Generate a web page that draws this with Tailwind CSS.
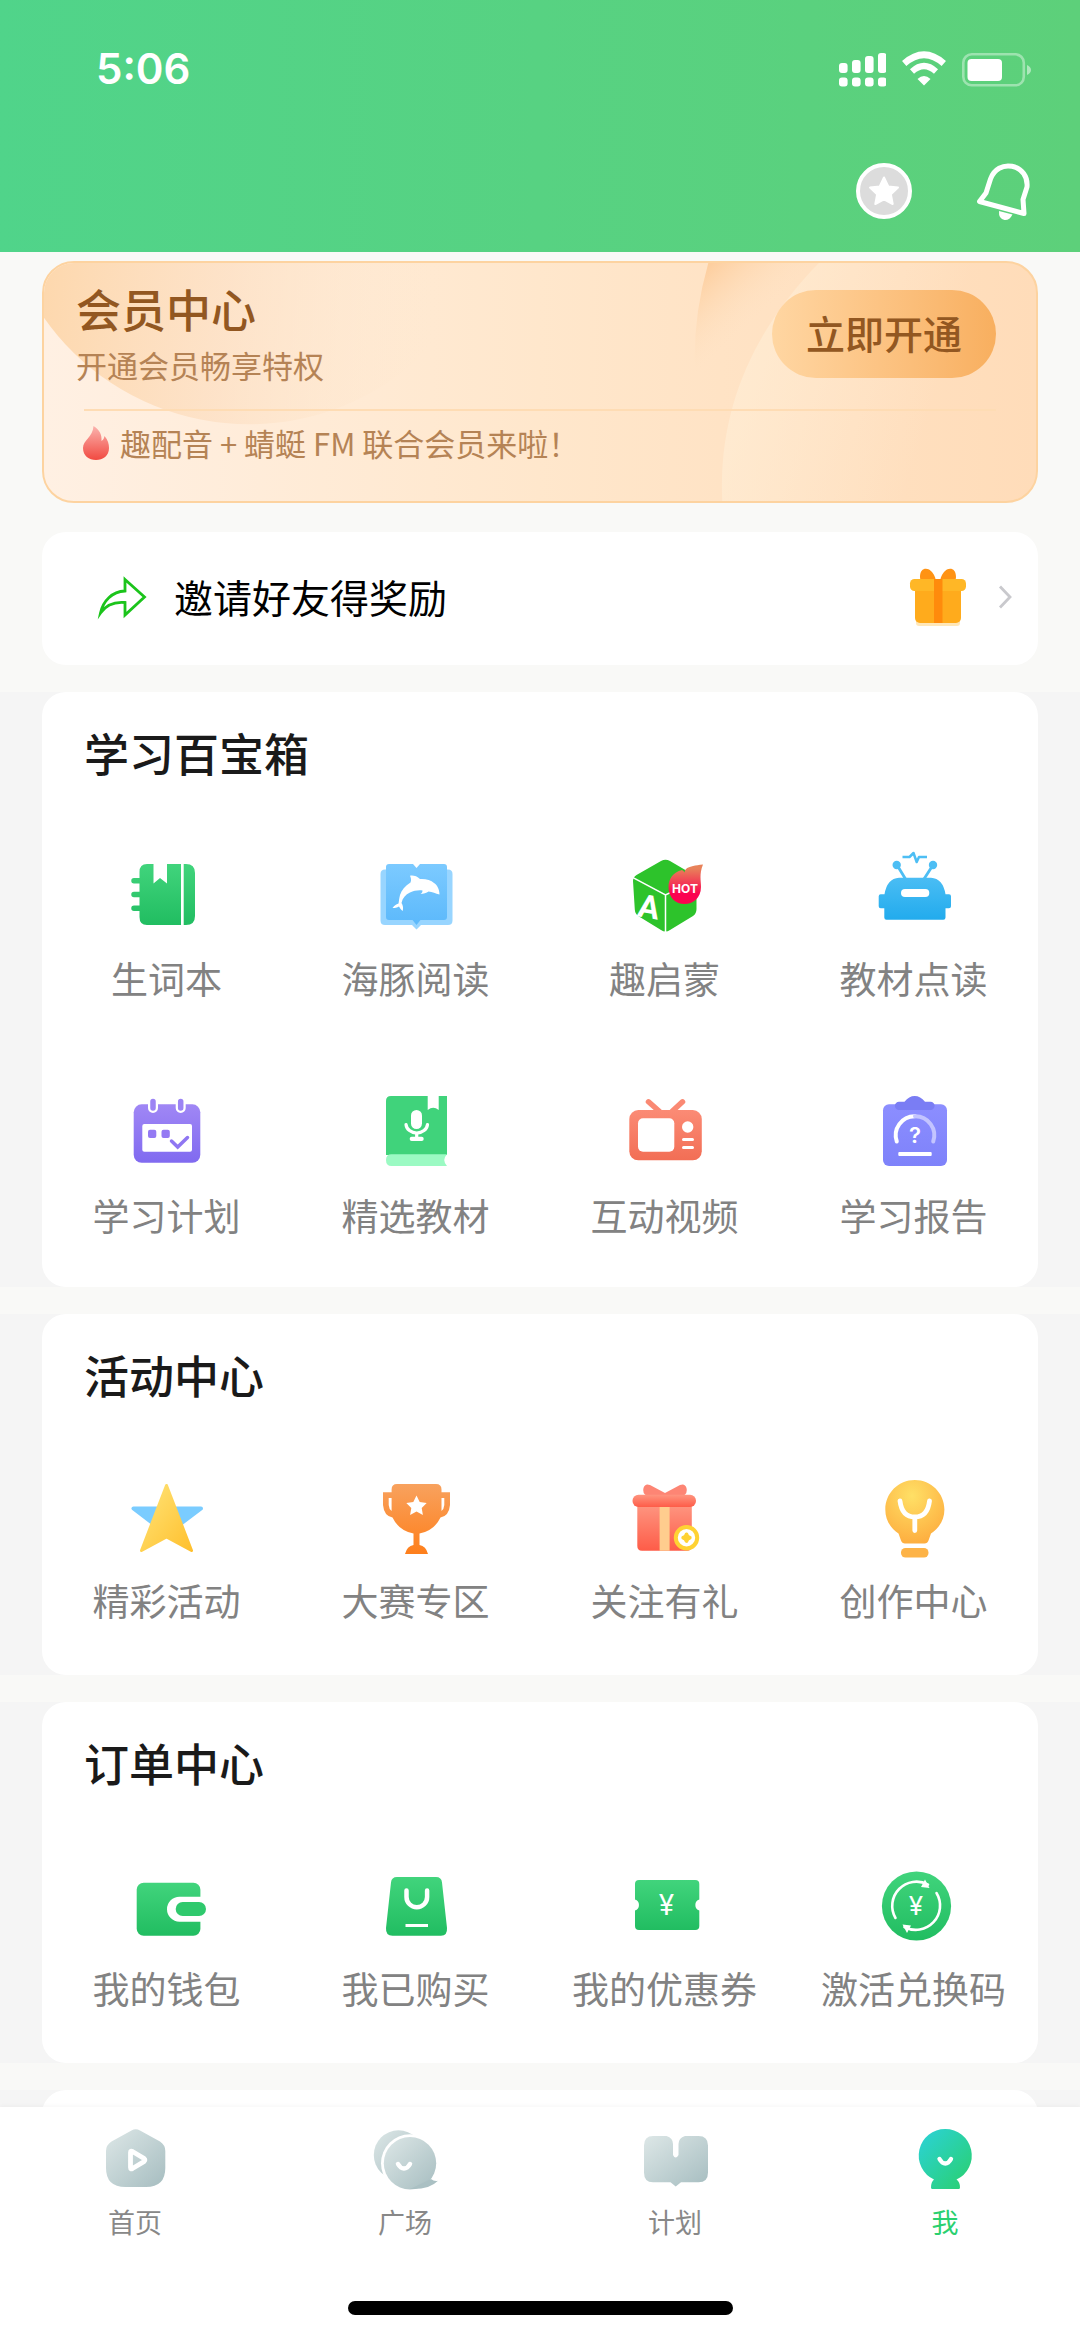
<!DOCTYPE html>
<html lang="zh-CN">
<head>
    <meta charset="UTF-8">
    <meta name="viewport" content="width=device-width, initial-scale=1.0">
    <title>我</title>
    <script src="https://cdn.jsdelivr.net/npm/@tailwindcss/browser@4"></script>
</head>
<body class="h-screen flex flex-col overflow-hidden bg-[#f9f9f7] font-['Noto_Sans_CJK_SC',sans-serif]">
    <!-- shared gradients -->
    <svg class="absolute size-0" aria-hidden="true">
        <defs>
            <linearGradient id="green" x1="0" y1="0" x2="0" y2="1"><stop stop-color="#41d47c"/><stop offset="1" stop-color="#21bd61"/></linearGradient>
            <linearGradient id="blue" x1="0" y1="0" x2="0" y2="1"><stop stop-color="#7ccaff"/><stop offset="1" stop-color="#5cb9fb"/></linearGradient>
            <linearGradient id="sky" x1="0" y1="0" x2="0" y2="1"><stop stop-color="#4abdf4"/><stop offset="1" stop-color="#22abed"/></linearGradient>
            <linearGradient id="hot" x1="0" y1="0" x2="0" y2="1"><stop offset=".1" stop-color="#e8825a"/><stop offset=".75" stop-color="#fb0350"/></linearGradient>
            <linearGradient id="purple" x1="0" y1="0" x2="0" y2="1"><stop stop-color="#a087f5"/><stop offset="1" stop-color="#806af0"/></linearGradient>
            <linearGradient id="coral" x1="0" y1="0" x2="0" y2="1"><stop stop-color="#fb8b75"/><stop offset="1" stop-color="#f26e55"/></linearGradient>
            <linearGradient id="indigo" x1="0" y1="0" x2="0" y2="1"><stop stop-color="#8c8eff"/><stop offset="1" stop-color="#7e82fa"/></linearGradient>
            <linearGradient id="gold" x1="0" y1="0" x2="1" y2="1"><stop stop-color="#ffe478"/><stop offset="1" stop-color="#ffc02e"/></linearGradient>
            <linearGradient id="orange" x1="0" y1="0" x2="0" y2="1"><stop stop-color="#f8a25e"/><stop offset="1" stop-color="#fe7f1b"/></linearGradient>
            <linearGradient id="red" x1="0" y1="0" x2="0" y2="1"><stop stop-color="#fe9580"/><stop offset="1" stop-color="#fe5c48"/></linearGradient>
            <radialGradient id="bulb" cx=".45" cy=".25" r=".8"><stop stop-color="#ffe066"/><stop offset="1" stop-color="#fdab3d"/></radialGradient>
            <linearGradient id="gray" x1="0" y1="0" x2="1" y2="1"><stop stop-color="#dde7e7"/><stop offset="1" stop-color="#a6bdc0"/></linearGradient>
            <linearGradient id="me" x1="0" y1="0" x2="1" y2="1"><stop offset=".1" stop-color="#2bd2cf"/><stop offset=".85" stop-color="#2ad07c"/></linearGradient>
            <linearGradient id="flame" x1="0" y1="0" x2="0" y2="1"><stop stop-color="#fbb3ae"/><stop offset="1" stop-color="#f14a41"/></linearGradient>
            <linearGradient id="glowLeft" gradientUnits="userSpaceOnUse" x1="0" y1="40" x2="400" y2="80"><stop stop-color="#fdd8ae"/><stop offset=".45" stop-color="#fde0c4" stop-opacity=".8"/><stop offset="1" stop-color="#fee9d0" stop-opacity="0"/></linearGradient>
            <linearGradient id="glowMid" gradientUnits="userSpaceOnUse" x1="655" y1="10" x2="705" y2="65"><stop stop-color="#fdcd9c"/><stop offset="1" stop-color="#fee0c0" stop-opacity="0"/></linearGradient>
            <linearGradient id="glowRight" gradientUnits="userSpaceOnUse" x1="690" y1="60" x2="900" y2="120"><stop stop-color="#fff2dc" stop-opacity=".55"/><stop offset="1" stop-color="#fff0dc" stop-opacity="0"/></linearGradient>
        </defs>
    </svg>

    <header class="shrink-0 h-[252px] bg-linear-to-r from-[#50d48a] via-[#57d282] to-[#5dd07a] text-white">
        <div class="flex items-center justify-between h-[138px] pl-24 pr-12">
            <span class="font-['Inter',sans-serif] text-[42px] font-semibold leading-none">5:06</span>
            <div class="flex items-center gap-4">
                <svg class="w-12 h-9" viewBox="0 0 48 36" fill="#fff">
                    <rect x="1" y="12" width="8.6" height="10" rx="3"/><rect x="14" y="9" width="8.6" height="13" rx="3"/><rect x="27" y="5" width="8.6" height="17" rx="3"/><rect x="40" y="2" width="8.6" height="20" rx="3"/>
                    <rect x="1" y="26.5" width="8.6" height="9" rx="3"/><rect x="14" y="26.5" width="8.6" height="9" rx="3"/><rect x="27" y="26.5" width="8.6" height="9" rx="3"/><rect x="40" y="26.5" width="8.6" height="9" rx="3"/>
                </svg>
                <svg class="w-11 h-9" viewBox="0 0 44 36" fill="none" stroke="#fff">
                    <path d="M2.200 12.500Q22 -5 41.800 12.500" stroke-width="6.500"/>
                    <path d="M10 20.500Q22 9.500 34 20.500" stroke-width="6"/>
                    <path d="M22 34.500l-6.500-6.500q6.500-6 13 0z" fill="#fff" stroke="none"/>
                </svg>
                <svg class="w-[70px] h-9" viewBox="0 0 70 36">
                    <rect x="1.300" y="3.300" width="60.500" height="31" rx="8.500" fill="none" stroke="#fff" stroke-opacity=".4" stroke-width="2.600"/>
                    <rect x="5.500" y="8" width="34.500" height="22" rx="4" fill="#fff"/>
                    <path d="M65 14q4 2 4 5t-4 5z" fill="#fff" fill-opacity=".5"/>
                </svg>
            </div>
        </div>
        <div class="flex justify-end gap-15 pr-12 pt-[18px]">
            <button type="button" aria-label="积分" class="size-[60px] mt-1">
                <svg viewBox="0 0 60 60" class="size-full">
                    <circle cx="32" cy="31" r="26" fill="#dcdcdc" stroke="#fff" stroke-width="4"/>
                    <path d="M32 17.500l4.300 8.900 9.700 1.200-7.100 6.800 1.800 9.600-8.700-4.700-8.700 4.700 1.800-9.600-7.100-6.800 9.700-1.200z" fill="#fff" stroke="#fff" stroke-width="2" stroke-linejoin="round"/>
                </svg>
            </button>
            <button type="button" aria-label="通知" class="w-[60px] h-[72px]">
                <svg viewBox="0 0 60 72" class="size-full">
                    <path d="M7.500 45.500L14 37 18.500 23C22 13 31 8.500 40 10.300 50 12.500 56 20.500 55 31L51 43.500 52 57.500Z" fill="none" stroke="#fff" stroke-width="5" stroke-linejoin="round"/>
                    <path d="M27 55l13.500 3.500q-3 6-8 5.500-6-1-5.500-9z" fill="#fff"/>
                </svg>
            </button>
        </div>
    </header>

    <main class="flex-1 min-h-0 overflow-hidden pt-[9px] flex flex-col gap-[27px]">
        <section class="relative shrink-0 mx-[42px] mb-0.5 h-[242px] overflow-hidden rounded-[32px] border-2 border-[#fdd3a0] bg-linear-to-r from-[#fff0e3] via-[#ffe7cc] to-[#ffdcb9]">
            <svg class="absolute inset-0 size-full" viewBox="0 0 996 242" preserveAspectRatio="none" aria-hidden="true">
                <circle cx="206" cy="-86" r="250" fill="url(#glowLeft)"/>
                <path d="M667 0Q650 60 654 120L800 120V0z" fill="url(#glowMid)"/>
                <path d="M778 0C720 60 676 140 681 242H996V0z" fill="url(#glowRight)"/>
            </svg>
            <div class="relative pl-8 pr-10 pt-[18px]">
                <div class="flex items-center justify-between">
                    <div>
                        <h2 class="text-[45px] leading-[56px] font-medium text-[#925721]">会员中心</h2>
                        <p class="mt-1.5 text-[31px] leading-[44px] text-[#b58355]">开通会员畅享特权</p>
                    </div>
                    <button type="button" class="w-56 h-[88px] pb-1 rounded-full bg-linear-to-r from-[#ffd6a2] to-[#f8af5f] text-[39px] font-medium text-[#925721]">立即开通</button>
                </div>
                <hr class="mt-[22px] ml-2 border-t-2 border-[#fedcb4]">
                <p class="mt-2.5 flex items-center gap-2.5 pl-1.5 text-[31px] leading-[44px] text-[#b58355]">
                    <svg class="w-7 h-9" viewBox="0 0 28 36" aria-hidden="true"><path d="M11.500 1C18 5 20 10 19.500 16 21.500 15 22 13 22.500 11 26 15 27 19 27 23 27 31 21 35 14 35S1 31 1 23C1 15 11 12 11.500 1Z" fill="url(#flame)"/></svg>
                    <span>趣配音 + 蜻蜓 FM 联合会员来啦！</span>
                </p>
            </div>
        </section>

        <a href="#" class="shrink-0 mx-[42px] h-[133px] flex items-center rounded-3xl bg-white pl-[54px] pr-[22px] pb-1">
            <svg class="w-[54px] h-12" viewBox="0 0 54 48" fill="none" stroke="#1bc41b" stroke-width="2.800" aria-hidden="true"><path d="M29 6.500L48.500 24 29 42V29.500C18 28.500 10 32 4.500 40 7 28 16 18.500 29 18Z" stroke-miterlimit="8"/></svg>
            <span class="ml-6 text-[39px] leading-none text-black">邀请好友得奖励</span>
            <svg class="ml-auto w-16 h-16" viewBox="0 0 64 64" aria-hidden="true">
                <rect x="10" y="54" width="44" height="7" rx="3" fill="#ffe7b8"/>
                <path d="M30 18C24 17 14 20 14 12 14 2 22 2 26 7 29 11 30 14 30 18ZM34 18C40 17 50 20 50 12 50 2 42 2 38 7 35 11 34 14 34 18Z" fill="#ff9314"/>
                <rect x="9" y="20" width="46" height="38" rx="5" fill="#ffab1c"/>
                <rect x="4" y="14" width="56" height="12" rx="4.500" fill="#ffb726"/>
                <rect x="28" y="14" width="8.500" height="44" fill="#ff8b0c"/>
            </svg>
            <svg class="ml-[26px] w-5 h-7" viewBox="0 0 20 28" fill="none" stroke="#c9c9cd" stroke-width="2.800" aria-hidden="true"><path d="M4 3.500L14 14 4 24.500"/></svg>
        </a>

        <section class="shrink-0 bg-[#f5f5f5] px-[42px]">
            <div class="rounded-3xl bg-white pt-[34px] pb-[46px]">
                <h2 class="px-[42px] text-[45px] leading-[54px] font-medium text-[#1a1a1a]">学习百宝箱</h2>
                <div class="mt-[66px] grid grid-cols-4 gap-y-[79px]">
                    <a href="#" class="flex flex-col items-center gap-2.5">
                        <svg class="size-24" viewBox="0 0 96 96" aria-hidden="true">
                            <path d="M28 18H34.500V37.500L41 32 48 37.500V18H62V79H28Q20.500 79 20.500 71V65H15a2.700 2.700 0 0 1 0-5.500h5.500V51.200H15a2.700 2.700 0 0 1 0-5.500h5.500V37.400H15a2.700 2.700 0 0 1 0-5.500h5.500V26Q20.500 18 28 18ZM64.700 18H67q9 0 9 9V70q0 9-9 9H64.700Z" fill="url(#green)"/>
                        </svg>
                        <span class="text-[37px] leading-[52px] text-[#828282]">生词本</span>
                    </a>
                    <a href="#" class="flex flex-col items-center gap-2.5">
                        <svg class="size-24" viewBox="0 0 96 96" aria-hidden="true">
                            <path d="M17 23.500H80q4.500 0 4.500 4.500V74.500q0 4.500-4.500 4.500H53L48.500 83.500 44 79H17q-4.500 0-4.500-4.500V28q0-4.500 4.500-4.500Z" fill="#98d5ff"/>
                            <path d="M21 18H45L48.500 22 52 18H76q3 0 3 3V71q0 3-3 3H52.500L48.500 79 44.500 74H21q-3 0-3-3V21q0-3 3-3Z" fill="url(#blue)"/>
                            <path d="M71.500 48.500C71.500 43 69 39 66 37 63 34 57 32.500 52 33 49 30 45 29 42 29.700 43 32 43.500 34 42.500 36.500 37 40 33.500 44 32 49 31 53 31 55 30.500 57.500 28 58 26 60 24.500 62 27 62 29 61.500 31 60.500 32 62 33 64 34.700 65 35.500 62 35 59 33.500 57 34.500 52 37.500 48.500 42 46.500 46 44.700 50 44 54.500 44.500 54.500 46 54 47 52.500 48 55.500 48 58.500 47 60.500 45.500 64.500 46 67.500 47.500 71.500 48.500Z" fill="#fff"/>
                        </svg>
                        <span class="text-[37px] leading-[52px] text-[#828282]">海豚阅读</span>
                    </a>
                    <a href="#" class="flex flex-col items-center gap-2.5">
                        <svg class="size-24" viewBox="0 0 96 96" aria-hidden="true">
                            <path d="M44 15q4.500-2.500 9 0L76 28.500q3.500 2 3.500 6V63q0 4.500-3.500 7L53 84q-4.500 3-9 0L22 70.500q-4-2.500-4.200-7L16 35q0-4 3.500-6Z" fill="#2dc32b"/>
                            <path d="M16 31.700L48.500 49 80 34M48.500 49V86" fill="none" stroke="#fff" stroke-width="1.500"/>
                            <text x="32" y="72" text-anchor="middle" transform="rotate(10 32 61)" font-family="Roboto, sans-serif" font-size="32" font-weight="700" fill="#fff">A</text>
                            <path d="M86 18.500C70 20 66 23 68.500 29 68.500 27 67 25 65 24 56 26 51.500 33 51.500 41 51.500 52 59 58 67.500 58S84 52 84 41C84 35 82 28 86 18.500Z" fill="url(#hot)"/>
                            <text x="68" y="47" text-anchor="middle" font-family="Inter, sans-serif" font-size="12" font-weight="700" fill="#fff">HOT</text>
                        </svg>
                        <span class="text-[37px] leading-[52px] text-[#828282]">趣启蒙</span>
                    </a>
                    <a href="#" class="flex flex-col items-center gap-2.5">
                        <svg class="size-24" viewBox="0 0 96 96" aria-hidden="true">
                            <g fill="none" stroke="#4dbef4">
                                <path d="M36.500 11H43.500L47.500 7 50.700 16 53 11H61" stroke-width="2.500" stroke-linejoin="round"/>
                                <path d="M31 19L39.500 33M67 19L58 33" stroke-width="2.800"/>
                            </g>
                            <circle cx="30.700" cy="19" r="4.200" fill="#4dbef4"/><circle cx="67" cy="19" r="4.200" fill="#4dbef4"/>
                            <path d="M33 31.700H65Q77 32.500 79.500 48.300H83q2 0 2 2V60.300q0 2-2 2H79.500V71.500q0 2.200-2.200 2.200H20.500q-2.200 0-2.200-2.200V62.300H14.700q-2 0-2-2V50.300q0-2 2-2H18.500Q21 32.500 33 31.700Z" fill="url(#sky)"/>
                            <rect x="35" y="43" width="28.300" height="8" rx="4" fill="#fff"/>
                        </svg>
                        <span class="text-[37px] leading-[52px] text-[#828282]">教材点读</span>
                    </a>
                    <a href="#" class="flex flex-col items-center gap-2.5">
                        <svg class="size-24" viewBox="0 0 96 96" aria-hidden="true">
                            <rect x="14.700" y="21.300" width="66.600" height="58.500" rx="8" fill="url(#purple)"/>
                            <path d="M34 18V25M61.700 18V25" stroke="#fff" stroke-width="10" stroke-linecap="round"/>
                            <path d="M34 18.500V25M61.700 18.500V25" stroke="#9c84f4" stroke-width="5.500" stroke-linecap="round"/>
                            <rect x="23.300" y="41" width="49.700" height="27.700" rx="2" fill="#fff"/>
                            <rect x="29" y="46.700" width="8.300" height="8.300" rx="2" fill="#947af3"/><rect x="42.500" y="46.700" width="8.300" height="8.300" rx="2" fill="#947af3"/>
                            <path d="M52.500 58L58.700 64 68.500 54.500" fill="none" stroke="#8f76f2" stroke-width="3.500" stroke-linecap="round"/>
                        </svg>
                        <span class="text-[37px] leading-[52px] text-[#828282]">学习计划</span>
                    </a>
                    <a href="#" class="flex flex-col items-center gap-2.5">
                        <svg class="size-24" viewBox="0 0 96 96" aria-hidden="true">
                            <path d="M23 13H79V72H18V18q0-5 5-5Z" fill="#40d37b"/>
                            <path d="M23.500 71.300H79Q73.500 77 79 83H23.500q-5.500 0-5.500-6 0-5.700 5.500-5.700Z" fill="#9bfac3"/>
                            <path d="M59.700 12H70.700V27Q65.200 22.500 59.700 27Z" fill="#fff"/>
                            <rect x="43" y="27" width="11" height="19" rx="5.500" fill="#fff"/>
                            <path d="M38 41.500a10.800 9.500 0 0 0 21.500 0M48.700 50.500V55" fill="none" stroke="#fff" stroke-width="3.200" stroke-linecap="round"/>
                            <rect x="41.700" y="53.700" width="14" height="4.300" rx="2" fill="#fff"/>
                        </svg>
                        <span class="text-[37px] leading-[52px] text-[#828282]">精选教材</span>
                    </a>
                    <a href="#" class="flex flex-col items-center gap-2.5">
                        <svg class="size-24" viewBox="0 0 96 96" aria-hidden="true">
                            <path d="M31.500 18.800L42.500 28.500M65.500 18.800L55 28.500" stroke="#fa8973" stroke-width="5.500" stroke-linecap="round"/>
                            <rect x="12.300" y="27" width="72.500" height="50.300" rx="9" fill="url(#coral)"/>
                            <rect x="21" y="35.300" width="36.300" height="33.400" rx="5" fill="#fff"/>
                            <circle cx="70.700" cy="44" r="5.700" fill="#fff"/>
                            <path d="M66.500 56.400H75.500M66.500 64.600H75.500" stroke="#fff" stroke-width="3" stroke-linecap="round"/>
                        </svg>
                        <span class="text-[37px] leading-[52px] text-[#828282]">互动视频</span>
                    </a>
                    <a href="#" class="flex flex-col items-center gap-2.5">
                        <svg class="size-24" viewBox="0 0 96 96" aria-hidden="true">
                            <rect x="17" y="21.300" width="64" height="61.700" rx="6" fill="url(#indigo)"/>
                            <path d="M33 18.700H38.500Q43 13 48.700 13T59 18.700H64.500a4.100 4.100 0 0 1 0 8.300H33a4.100 4.100 0 0 1 0-8.300Z" fill="#7a7df4"/>
                            <path d="M30.800 58.500A19 19 0 0 1 49 33.300" fill="none" stroke="#fff" stroke-width="4" stroke-linecap="round"/>
                            <path d="M49 33.300A19 19 0 0 1 67.200 58.500" fill="none" stroke="#c3c4ff" stroke-width="4" stroke-linecap="round"/>
                            <text x="49" y="60" text-anchor="middle" font-family="Inter, sans-serif" font-size="22" font-weight="600" fill="#fff">?</text>
                            <rect x="32.300" y="69" width="33.400" height="4" rx="1" fill="#fff"/>
                        </svg>
                        <span class="text-[37px] leading-[52px] text-[#828282]">学习报告</span>
                    </a>
                </div>
            </div>
        </section>

        <section class="shrink-0 bg-[#f5f5f5] px-[42px]">
            <div class="rounded-3xl bg-white pt-[34px] pb-[49px]">
                <h2 class="px-[42px] text-[45px] leading-[54px] font-medium text-[#1a1a1a]">活动中心</h2>
                <div class="mt-[66px] grid grid-cols-4">
                    <a href="#" class="flex flex-col items-center gap-2.5">
                        <svg class="size-24" viewBox="0 0 96 96" aria-hidden="true">
                            <path d="M14.500 40.500H82L48 66Z" fill="#7accff" stroke="#7accff" stroke-width="4" stroke-linejoin="round"/>
                            <path d="M47.500 17.500L72.500 82.500 47.500 69 22.500 82.500Z" fill="url(#gold)" stroke="url(#gold)" stroke-width="3" stroke-linejoin="round"/>
                        </svg>
                        <span class="text-[37px] leading-[52px] text-[#828282]">精彩活动</span>
                    </a>
                    <a href="#" class="flex flex-col items-center gap-2.5">
                        <svg class="size-24" viewBox="0 0 96 96" aria-hidden="true">
                            <path fill-rule="evenodd" d="M29 16H68Q73.500 16 73.500 21.500V24.300H82V37Q81 48 72.500 49.500 66 63 51.500 65.500V77Q58 78 60 86H37Q39 78 45.500 77V65.500Q31 63 24.500 49.500 16 48 15 37V24.300H23.600V21.500Q23.600 16 29 16ZM20.700 30V37Q21 41 23.600 43V30ZM73.500 30V43Q76 41 76.300 37V30Z" fill="url(#orange)"/>
                            <path d="M48.500 27.500l3.200 6.400 7 1-5 5 1.200 7-6.400-3.300-6.400 3.300 1.200-7-5-5 7-1z" fill="#fff"/>
                        </svg>
                        <span class="text-[37px] leading-[52px] text-[#828282]">大赛专区</span>
                    </a>
                    <a href="#" class="flex flex-col items-center gap-2.5">
                        <svg class="size-24" viewBox="0 0 96 96" aria-hidden="true">
                            <path d="M33 17L48 25 63 17Q68 15 69.500 20 71 25 66 28H30Q25 25 26.500 20 28 15 33 17Z" fill="#fd8574"/>
                            <path d="M20.300 37H74.800V78q0 4.700-4.700 4.700H25q-4.700 0-4.700-4.700Z" fill="url(#red)"/>
                            <rect x="42.600" y="38" width="10" height="44.700" fill="#ffcd8e"/>
                            <rect x="15.500" y="26.700" width="63.500" height="12.300" rx="6" fill="url(#red)"/>
                            <circle cx="69.500" cy="69.700" r="10.700" fill="#fff" stroke="#ffd233" stroke-width="4"/>
                            <path d="M69.500 66.500Q70 69.200 72.700 69.700 70 70.200 69.500 72.900 69 70.200 66.300 69.700 69 69.200 69.500 66.500Z" fill="#ffd233" stroke="#ffd233" stroke-width="4" stroke-linejoin="round"/>
                        </svg>
                        <span class="text-[37px] leading-[52px] text-[#828282]">关注有礼</span>
                    </a>
                    <a href="#" class="flex flex-col items-center gap-2.5">
                        <svg class="size-24" viewBox="0 0 96 96" aria-hidden="true">
                            <path d="M48.800 12C65 12 78.400 25 78.400 41.500 78.400 52 73 60 65 65.500L62.500 72.500Q61.500 75.500 58.500 75.500H39Q36 75.500 35 72.500L32.500 65.500C24.500 60 19.300 52 19.300 41.500 19.300 25 32.500 12 48.800 12Z" fill="url(#bulb)"/>
                            <rect x="35" y="80" width="27.500" height="9.500" rx="4.500" fill="#fdb347"/>
                            <path d="M34 33Q36 49 48.800 49T63.500 33M48.800 49V62.500" fill="none" stroke="#fff" stroke-width="4.800" stroke-linecap="round"/>
                        </svg>
                        <span class="text-[37px] leading-[52px] text-[#828282]">创作中心</span>
                    </a>
                </div>
            </div>
        </section>

        <section class="shrink-0 bg-[#f5f5f5] px-[42px]">
            <div class="rounded-3xl bg-white pt-[34px] pb-[49px]">
                <h2 class="px-[42px] text-[45px] leading-[54px] font-medium text-[#1a1a1a]">订单中心</h2>
                <div class="mt-[66px] grid grid-cols-4">
                    <a href="#" class="flex flex-col items-center gap-2.5">
                        <svg class="size-24" viewBox="0 4 96 96" aria-hidden="true">
                            <rect x="17.700" y="30.700" width="63.700" height="53" rx="7" fill="url(#green)"/>
                            <path d="M82 44.700H60.500a12.500 12.500 0 0 0 0 25H82Z" fill="#fff"/>
                            <rect x="56.700" y="50" width="30.300" height="14" rx="7" fill="#2fc96d"/>
                        </svg>
                        <span class="text-[37px] leading-[52px] text-[#828282]">我的钱包</span>
                    </a>
                    <a href="#" class="flex flex-col items-center gap-2.5">
                        <svg class="size-24" viewBox="0 4 96 96" aria-hidden="true">
                            <path d="M29 25H68Q73.500 25 74 30.500L79 76Q79.500 83.700 73 83.700H24.500Q17.500 83.700 18 76L23 30.500Q23.500 25 29 25Z" fill="url(#green)"/>
                            <path d="M38.500 38.500V45a10.300 10.300 0 0 0 20.600 0V38.500" fill="none" stroke="#fff" stroke-width="4.500" stroke-linecap="round"/>
                            <path d="M37.500 73.500H60" stroke="#fff" stroke-width="3"/>
                        </svg>
                        <span class="text-[37px] leading-[52px] text-[#828282]">我已购买</span>
                    </a>
                    <a href="#" class="flex flex-col items-center gap-2.5">
                        <svg class="size-24" viewBox="0 4 96 96" aria-hidden="true">
                            <path d="M22 28H78.300q4 0 4 4V47.500a5.800 5.800 0 0 0 0 11V74q0 4-4 4H22q-4 0-4-4V58.500a5.800 5.800 0 0 0 0-11V32q0-4 4-4Z" fill="url(#green)"/>
                            <text x="49.500" y="63" text-anchor="middle" font-family="Inter, sans-serif" font-size="28" fill="#fff">¥</text>
                        </svg>
                        <span class="text-[37px] leading-[52px] text-[#828282]">我的优惠券</span>
                    </a>
                    <a href="#" class="flex flex-col items-center gap-2.5">
                        <svg class="size-24" viewBox="0 4 96 96" aria-hidden="true">
                            <circle cx="50.500" cy="54" r="34.600" fill="url(#green)"/>
                            <g fill="none" stroke="#fff" stroke-width="2.600" stroke-linecap="round">
                                <path d="M29.500 66A24.200 24.200 0 0 1 62 32.600M70.500 41A24.200 24.200 0 0 1 38.500 75"/>
                            </g>
                            <path d="M59 27.500L63.500 36 55 35ZM41 81L36.500 72.500 45 73.500Z" fill="#fff"/>
                            <text x="50" y="63" text-anchor="middle" font-family="Inter, sans-serif" font-size="26" fill="#fff">¥</text>
                        </svg>
                        <span class="text-[37px] leading-[52px] text-[#828282]">激活兑换码</span>
                    </a>
                </div>
            </div>
        </section>

        <section class="shrink-0 bg-[#f5f5f5] px-[42px]">
            <div class="h-40 rounded-3xl bg-white"></div>
        </section>
    </main>

    <nav class="shrink-0 bg-white shadow-[0_-1px_4px_#0000000a]">
        <div class="grid grid-cols-4 pt-4">
            <a href="#" class="flex flex-col items-center gap-2.5 text-[27px] leading-[34px] text-[#888]">
                <svg class="size-[72px]" viewBox="0 0 72 72" aria-hidden="true">
                    <path d="M32.500 7.500Q36.700 5 41 7.500L61 18.500Q66.300 22 66.300 28V45Q66.300 64 47 64H26.500Q7 64 7 45V28Q7 22 12.500 18.500Z" fill="url(#gray)"/>
                    <path d="M31.500 29.500V44.500Q31.500 46.500 33.500 45.500L45 38.500Q46.500 37 45 35.500L33.500 28.500Q31.500 27.500 31.500 29.500Z" fill="none" stroke="#fff" stroke-width="4.800"/>
                </svg>
                首页
            </a>
            <a href="#" class="flex flex-col items-center gap-2.5 text-[27px] leading-[34px] text-[#888]">
                <svg class="size-[72px]" viewBox="0 0 72 72" aria-hidden="true">
                    <circle cx="29.500" cy="32" r="24.700" fill="url(#gray)"/>
                    <circle cx="41" cy="40.300" r="29" fill="#fff"/>
                    <circle cx="41" cy="40.300" r="26.200" fill="url(#gray)"/>
                    <path d="M62 56Q65 58.500 69 57.700 60 67 41 66Z" fill="#aac0c3"/>
                    <path d="M29 41Q31.500 45.500 35 45.500T41 41" fill="none" stroke="#fff" stroke-width="4.500" stroke-linecap="round"/>
                </svg>
                广场
            </a>
            <a href="#" class="flex flex-col items-center gap-2.5 text-[27px] leading-[34px] text-[#888]">
                <svg class="size-[72px]" viewBox="0 0 72 72" aria-hidden="true">
                    <path d="M14 13H27.500Q34 15 34 21V32Q36.500 37 39.500 32V21Q39.500 15 46 13H59.500Q69 13 69 22.500V49.500Q69 59.300 59.500 59.300H42L36.700 63.500 31.500 59.300H14Q5 59.300 5 49.500V22.500Q5 13 14 13Z" fill="url(#gray)"/>
                </svg>
                计划
            </a>
            <a href="#" aria-current="page" class="flex flex-col items-center gap-2.5 text-[27px] leading-[34px] text-[#2bd070]">
                <svg class="size-[72px]" viewBox="0 0 72 72" aria-hidden="true">
                    <path d="M36.200 6A26.500 26.500 0 0 1 47.500 56.500Q51 59 51 64.500 51 66 49.500 66H23.500Q22 66 22 64.500 22 59 25 56.500A26.500 26.500 0 0 1 36.200 6Z" fill="url(#me)"/>
                    <path d="M30.500 36Q33 40.500 36.300 40.500T42 36" fill="none" stroke="#fff" stroke-width="4.300" stroke-linecap="round"/>
                </svg>
                我
            </a>
        </div>
        <div class="mx-auto mt-[62px] mb-[22px] h-3.5 w-[385px] rounded-full bg-black"></div>
    </nav>
</body>
</html>
